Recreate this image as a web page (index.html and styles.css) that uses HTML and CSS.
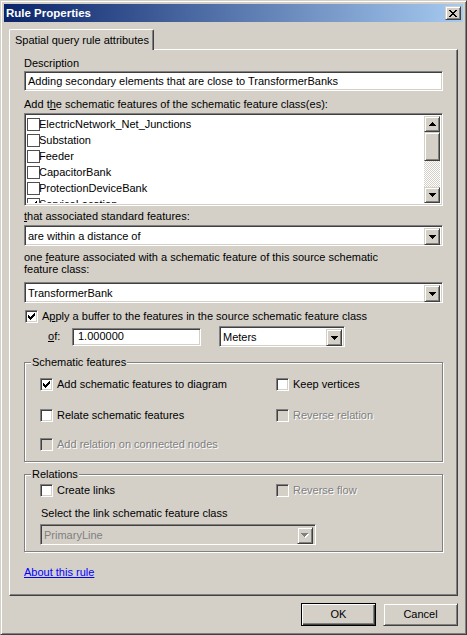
FILE: index.html
```html
<!DOCTYPE html>
<html lang="en">
<head>
    <meta charset="UTF-8">
    <meta name="viewport" content="width=device-width, initial-scale=1.0">
    <title>Rule Properties</title>
    <link rel="stylesheet" href="styles.css">
</head>
<body>
    <div class="window">
        <div class="titlebar">
            <span class="title">Rule Properties</span>
            <span class="btn close-btn">
                <svg width="8" height="7" viewBox="0 0 8 7" shape-rendering="crispEdges"><path d="M0 0h2v1h-2z M6 0h2v1h-2z M1 1h2v1h-2z M5 1h2v1h-2z M2 2h4v1h-4z M3 3h2v1h-2z M2 4h4v1h-4z M1 5h2v1h-2z M5 5h2v1h-2z M0 6h2v1h-2z M6 6h2v1h-2z"/></svg>
            </span>
        </div>

        <div class="dialog-body">
            <div class="tab">Spatial query rule attributes</div>

            <div class="panel">
                <div class="label desc-label">Description</div>
                <div class="field textbox desc-box">Adding secondary elements that are close to TransformerBanks</div>

                <div class="label classes-label">Add t<u>h</u>e schematic features of the schematic feature class(es):</div>
                <div class="field listbox">
                    <div class="list-items">
                        <div class="list-row"><span class="flat-check"></span>ElectricNetwork_Net_Junctions</div>
                        <div class="list-row"><span class="flat-check"></span>Substation</div>
                        <div class="list-row"><span class="flat-check"></span>Feeder</div>
                        <div class="list-row"><span class="flat-check"></span>CapacitorBank</div>
                        <div class="list-row"><span class="flat-check"></span>ProtectionDeviceBank</div>
                        <div class="list-row"><span class="flat-check checked">
                            <svg width="7" height="7" viewBox="0 0 7 7" shape-rendering="crispEdges"><path d="M6 0h1v1h-1z M5 1h2v1h-2z M0 2h1v1h-1z M4 2h3v1h-3z M0 3h2v1h-2z M3 3h3v1h-3z M0 4h5v1h-5z M1 5h3v1h-3z M2 6h1v1h-1z"/></svg>
                        </span>ServiceLocation</div>
                    </div>
                    <div class="scrollbar">
                        <span class="btn scroll-btn">
                            <svg width="7" height="4" viewBox="0 0 7 4" shape-rendering="crispEdges"><path d="M3 0h1v1h1v1h1v1h1v1h-7v-1h1v-1h1v-1h1z"/></svg>
                        </span>
                        <span class="btn scroll-thumb"></span>
                        <span class="scroll-track"></span>
                        <span class="btn scroll-btn">
                            <svg width="7" height="4" viewBox="0 0 7 4" shape-rendering="crispEdges"><path d="M0 0h7v1h-1v1h-1v1h-1v1h-1v-1h-1v-1h-1v-1h-1z"/></svg>
                        </span>
                    </div>
                </div>

                <div class="label assoc-label"><u>t</u>hat associated standard features:</div>
                <div class="field combo assoc-combo">
                    <span class="combo-value">are within a distance of</span>
                    <span class="btn combo-btn">
                        <svg width="7" height="4" viewBox="0 0 7 4" shape-rendering="crispEdges"><path d="M0 0h7v1h-1v1h-1v1h-1v1h-1v-1h-1v-1h-1v-1h-1z"/></svg>
                    </span>
                </div>

                <div class="label source-label">one <u>f</u>eature associated with a schematic feature of this source schematic<br>feature class:</div>
                <div class="field combo source-combo">
                    <span class="combo-value">TransformerBank</span>
                    <span class="btn combo-btn">
                        <svg width="7" height="4" viewBox="0 0 7 4" shape-rendering="crispEdges"><path d="M0 0h7v1h-1v1h-1v1h-1v1h-1v-1h-1v-1h-1v-1h-1z"/></svg>
                    </span>
                </div>

                <div class="check-row buffer-row">
                    <span class="check">
                        <svg width="7" height="7" viewBox="0 0 7 7" shape-rendering="crispEdges"><path d="M6 0h1v1h-1z M5 1h2v1h-2z M0 2h1v1h-1z M4 2h3v1h-3z M0 3h2v1h-2z M3 3h3v1h-3z M0 4h5v1h-5z M1 5h3v1h-3z M2 6h1v1h-1z"/></svg>
                    </span>
                    <span>A<u>p</u>ply a buffer to the features in the source schematic feature class</span>
                </div>

                <div class="of-row">
                    <span class="of-label"><u>o</u>f:</span>
                    <div class="field textbox distance-box">1.000000</div>
                    <div class="field combo units-combo">
                        <span class="combo-value">Meters</span>
                        <span class="btn combo-btn">
                            <svg width="7" height="4" viewBox="0 0 7 4" shape-rendering="crispEdges"><path d="M0 0h7v1h-1v1h-1v1h-1v1h-1v-1h-1v-1h-1v-1h-1z"/></svg>
                        </span>
                    </div>
                </div>

                <div class="group features-group">
                    <div class="group-title">Schematic features</div>
                    <div class="group-grid">
                        <div class="check-row row-first">
                            <span class="check">
                                <svg width="7" height="7" viewBox="0 0 7 7" shape-rendering="crispEdges"><path d="M6 0h1v1h-1z M5 1h2v1h-2z M0 2h1v1h-1z M4 2h3v1h-3z M0 3h2v1h-2z M3 3h3v1h-3z M0 4h5v1h-5z M1 5h3v1h-3z M2 6h1v1h-1z"/></svg>
                            </span>
                            <span>Add schematic features to diagram</span>
                        </div>
                        <div class="check-row row-first">
                            <span class="check"></span>
                            <span>Keep vertices</span>
                        </div>
                        <div class="check-row row-second">
                            <span class="check"></span>
                            <span>Relate schematic features</span>
                        </div>
                        <div class="check-row row-second disabled">
                            <span class="check"></span>
                            <span>Reverse relation</span>
                        </div>
                        <div class="check-row row-third disabled">
                            <span class="check"></span>
                            <span>Add relation on connected nodes</span>
                        </div>
                    </div>
                </div>

                <div class="group relations-group">
                    <div class="group-title">Relations</div>
                    <div class="group-grid">
                        <div class="check-row links-row">
                            <span class="check"></span>
                            <span>Create links</span>
                        </div>
                        <div class="check-row links-row disabled">
                            <span class="check"></span>
                            <span>Reverse flow</span>
                        </div>
                    </div>
                    <div class="label link-class-label">Select the link schematic feature class</div>
                    <div class="field combo link-combo disabled">
                        <span class="combo-value">PrimaryLine</span>
                        <span class="btn combo-btn">
                            <svg width="8" height="5" viewBox="0 0 8 5" shape-rendering="crispEdges"><path class="arrow-shadow" d="M1 1h7v1h-1v1h-1v1h-1v1h-1v-1h-1v-1h-1v-1h-1z"/><path d="M0 0h7v1h-1v1h-1v1h-1v1h-1v-1h-1v-1h-1v-1h-1z"/></svg>
                        </span>
                    </div>
                </div>

                <a class="about-link" href="#">About this rule</a>
            </div>

            <div class="button-row">
                <span class="btn dialog-btn default">OK</span>
                <span class="btn dialog-btn">Cancel</span>
            </div>
        </div>
    </div>
</body>
</html>
```

FILE: styles.css
```css
* {
    box-sizing: border-box;
}
body {
    margin: 0;
    background-color: #d4d0c8;
    font-family: "Liberation Sans", Arial, sans-serif;
    font-size: 11px;
    line-height: 13px;
    color: #000;
}
u {
    text-decoration-thickness: 1px;
    text-underline-offset: 1px;
}

/* window frame */
.window {
    width: 467px;
    height: 635px;
    display: flex;
    flex-direction: column;
    background-color: #d4d0c8;
    border: 1px solid;
    border-color: #d4d0c8 #404040 #404040 #d4d0c8;
    box-shadow: inset 1px 1px #fff, inset -1px -1px #808080;
    padding: 3px;
}
.titlebar {
    height: 18px;
    flex: none;
    display: flex;
    align-items: center;
    justify-content: space-between;
    padding: 0 2px;
    background: linear-gradient(to right, #0a246a, #a6caf0);
}
.title {
    color: #fff;
    font-weight: bold;
    font-size: 11.5px;
}

/* raised 3d controls */
.btn {
    display: flex;
    align-items: center;
    justify-content: center;
    background-color: #d4d0c8;
    border: 1px solid;
    border-color: #d4d0c8 #404040 #404040 #d4d0c8;
    box-shadow: inset 1px 1px #fff, inset -1px -1px #808080;
}
.close-btn {
    width: 16px;
    height: 14px;
}

/* sunken fields */
.field {
    background-color: #fff;
    border: 1px solid;
    border-color: #808080 #fff #fff #808080;
    box-shadow: inset 1px 1px #404040, inset -1px -1px #d4d0c8;
}
.textbox {
    padding: 0 3px;
    display: flex;
    align-items: center;
    white-space: nowrap;
}
.combo {
    display: flex;
    height: 21px;
    padding: 2px;
}
.combo-value {
    flex: 1;
    padding-left: 1px;
    line-height: 17px;
    white-space: nowrap;
}
.combo-btn {
    width: 16px;
    height: 17px;
}
.combo.disabled {
    background-color: #d4d0c8;
    color: #808080;
}
.combo.disabled svg {
    fill: #808080;
}
.combo.disabled .arrow-shadow {
    fill: #fff;
}

.dialog-body {
    flex: 1;
    display: flex;
    flex-direction: column;
    padding: 7px 5px 5px;
}
.tab {
    align-self: flex-start;
    position: relative;
    z-index: 1;
    height: 21px;
    margin-bottom: -1px;
    padding: 3px 4px 0 5px;
    line-height: 15px;
    background-color: #d4d0c8;
    border-top: 1px solid #fff;
    border-left: 1px solid #fff;
    border-right: 1px solid #404040;
    border-radius: 2px 2px 0 0;
    box-shadow: inset -1px 0 #808080;
}
.panel {
    flex: 1;
    display: flex;
    flex-direction: column;
    padding: 0 14px;
    border: 1px solid;
    border-color: #fff #404040 #404040 #fff;
    box-shadow: inset -1px -1px #808080;
}

.desc-label {
    margin-top: 7px;
}
.desc-box {
    margin-top: 1px;
    height: 20px;
}
.classes-label {
    margin-top: 7px;
}
.listbox {
    margin-top: 2px;
    height: 93px;
    display: flex;
    padding: 2px;
    overflow: hidden;
}
.list-items {
    flex: 1;
    overflow: hidden;
}
.list-row {
    height: 16px;
    display: flex;
    align-items: center;
    white-space: nowrap;
}
.flat-check {
    width: 13px;
    height: 13px;
    flex: none;
    margin-right: -1px;
    border: 1px solid #505050;
    background-color: #fff;
    display: flex;
    align-items: center;
    justify-content: center;
}
.scrollbar {
    width: 16px;
    display: flex;
    flex-direction: column;
}
.scroll-btn {
    height: 16px;
    flex: none;
}
.scroll-thumb {
    height: 29px;
    flex: none;
}
.scroll-track {
    flex: 1;
    background: repeating-conic-gradient(#d4d0c8 0 25%, #fff 0 50%) 0 0 / 2px 2px;
}

.assoc-label {
    margin-top: 4px;
}
.assoc-combo {
    margin-top: 2px;
}
.source-label {
    margin-top: 5px;
    line-height: 12px;
}
.source-combo {
    margin-top: 7px;
}

/* checkboxes */
.check-row {
    display: flex;
    align-items: center;
    gap: 4px;
    height: 13px;
    white-space: nowrap;
}
.check {
    width: 13px;
    height: 13px;
    flex: none;
    display: flex;
    align-items: center;
    justify-content: center;
    background-color: #fff;
    border: 1px solid;
    border-color: #808080 #fff #fff #808080;
    box-shadow: inset 1px 1px #404040, inset -1px -1px #d4d0c8;
}
.check-row.disabled {
    color: #808080;
    text-shadow: 1px 1px #fff;
}
.check-row.disabled .check {
    background-color: #d4d0c8;
}
.buffer-row {
    margin-top: 7px;
    margin-left: 1px;
}

.of-row {
    margin-top: 3px;
    height: 21px;
    display: flex;
    align-items: center;
    padding-left: 24px;
}
.of-label {
    width: 24px;
}
.distance-box {
    width: 129px;
    height: 18px;
    padding-left: 5px;
}
.units-combo {
    width: 126px;
    margin-left: 18px;
}

/* etched group boxes */
.group {
    border: 1px solid #808080;
    box-shadow: inset 1px 1px #fff, 1px 1px #fff;
    padding: 0 15px;
}
.group-title {
    width: fit-content;
    margin: -7px 0 0 -9px;
    padding: 0 1px;
    background-color: #d4d0c8;
}
.group-grid {
    display: grid;
    grid-template-columns: 236px 1fr;
}
.features-group {
    margin-top: 15px;
    padding-bottom: 10px;
}
.row-first {
    margin-top: 9px;
}
.row-second {
    margin-top: 18px;
}
.row-third {
    margin-top: 16px;
}
.relations-group {
    margin-top: 12px;
    padding-bottom: 6px;
}
.links-row {
    margin-top: 3px;
}
.link-class-label {
    margin-top: 10px;
    padding-left: 1px;
}
.link-combo {
    margin-top: 4px;
    width: 276px;
}

.about-link {
    align-self: flex-start;
    margin-top: 14px;
    color: #0000ff;
}

.button-row {
    display: flex;
    justify-content: flex-end;
    gap: 7px;
    margin-top: 7px;
}
.dialog-btn {
    width: 75px;
    height: 23px;
}
.dialog-btn.default {
    border-color: #000;
    box-shadow: inset 1px 1px #fff, inset -1px -1px #404040, inset -2px -2px #808080;
}
```
